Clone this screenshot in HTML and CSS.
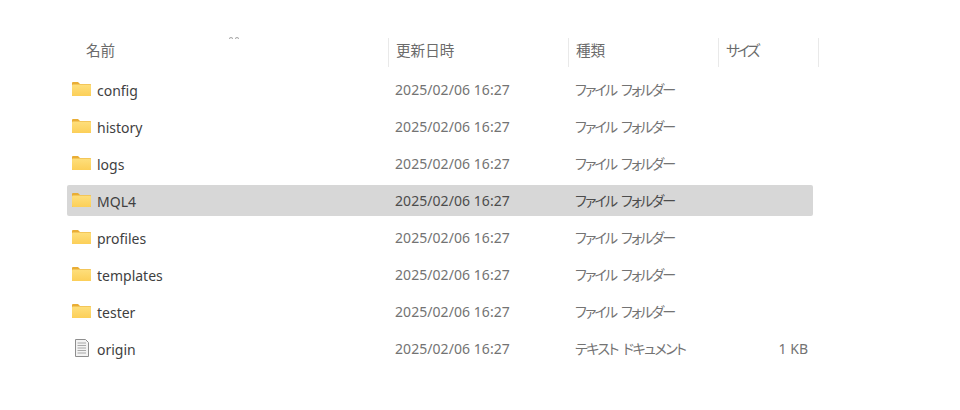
FILE: index.html
```html
<!DOCTYPE html>
<html lang="ja">
<head>
<meta charset="utf-8">
<title>Files</title>
<link rel="stylesheet" href="styles.css">
</head>
<body>
<main class="list">
  <div class="head">
    <div class="hcell hname">名前
      <svg class="sort" width="10" height="4" viewBox="0 0 10 4"><path d="M0.5 3 L1.5 1 M2.5 1 L3.5 3 M6.5 3 L7.5 1 M8.5 1 L9.5 3" stroke="#9a9a9a" stroke-width="1" fill="none"/></svg>
    </div>
    <div class="hcell">更新日時</div>
    <div class="hcell">種類</div>
    <div class="hcell hkana">サイズ</div>
  </div>
  <div class="rows">
    <div class="row"><span class="name"><svg class="ic" viewBox="0 0 19 14"><use href="#folder"/></svg>config</span><span class="date">2025/02/06 16:27</span><span class="kana">ファイル フォルダー</span><span class="size"></span></div>
    <div class="row"><span class="name"><svg class="ic" viewBox="0 0 19 14"><use href="#folder"/></svg>history</span><span class="date">2025/02/06 16:27</span><span class="kana">ファイル フォルダー</span><span class="size"></span></div>
    <div class="row"><span class="name"><svg class="ic" viewBox="0 0 19 14"><use href="#folder"/></svg>logs</span><span class="date">2025/02/06 16:27</span><span class="kana">ファイル フォルダー</span><span class="size"></span></div>
    <div class="row sel"><span class="name"><svg class="ic" viewBox="0 0 19 14"><use href="#folder"/></svg>MQL4</span><span class="date">2025/02/06 16:27</span><span class="kana">ファイル フォルダー</span><span class="size"></span></div>
    <div class="row"><span class="name"><svg class="ic" viewBox="0 0 19 14"><use href="#folder"/></svg>profiles</span><span class="date">2025/02/06 16:27</span><span class="kana">ファイル フォルダー</span><span class="size"></span></div>
    <div class="row"><span class="name"><svg class="ic" viewBox="0 0 19 14"><use href="#folder"/></svg>templates</span><span class="date">2025/02/06 16:27</span><span class="kana">ファイル フォルダー</span><span class="size"></span></div>
    <div class="row"><span class="name"><svg class="ic" viewBox="0 0 19 14"><use href="#folder"/></svg>tester</span><span class="date">2025/02/06 16:27</span><span class="kana">ファイル フォルダー</span><span class="size"></span></div>
    <div class="row"><span class="name"><svg class="ic doc" viewBox="0 0 20 20"><path d="M3.5 1.5H13.5L16.5 4.5V18.5H3.5Z" fill="#f3f3f3" stroke="#8e8e8e"/><path d="M5.5 5H14M5.5 7.5H14M5.5 10H14M5.5 12.5H14M5.5 15H14" stroke="#a8a8a8"/></svg>origin</span><span class="date">2025/02/06 16:27</span><span class="kana kana-wide">テキスト ドキュメント</span><span class="size">1 KB</span></div>
  </div>
</main>
<svg class="defs" width="0" height="0">
  <defs>
    <linearGradient id="fg" x1="0" y1="0" x2="0" y2="1"><stop offset="0" stop-color="#fedf7c"/><stop offset="1" stop-color="#fccf58"/></linearGradient>
    <symbol id="folder" viewBox="0 0 19 14">
      <path d="M0 1 Q0 0 1 0 H6 L8 2 H18 Q19 2 19 3 V13 Q19 14 18 14 H1 Q0 14 0 13 Z" fill="#e9ad35"/>
      <rect x="0" y="2.5" width="19" height="11.5" rx="1" fill="url(#fg)"/>
    </symbol>
  </defs>
</svg>
</body>
</html>
```
FILE: styles.css
```css
html, body { margin: 0; padding: 0; background: #fff; }
body {
  width: 960px;
  height: 410px;
  overflow: hidden;
  font-family: "Noto Sans", "Noto Sans CJK JP", sans-serif;
  font-size: 14px;
  color: #737373;
}
.list {
  width: 752px;
  margin-left: 67px;
  padding-top: 38px;
}
.head {
  display: grid;
  grid-template-columns: 322px 180px 150px 100px;
  height: 29px;
  margin-bottom: 7px;
}
.hcell {
  position: relative;
  display: flex;
  align-items: center;
  box-sizing: border-box;
  padding-left: 7px;
  padding-bottom: 7px;
  border-right: 1px solid #e9e9e9;
  color: #6b6b6b;
  font-size: 14.6px;
}
.hname { padding-left: 19px; }
.hkana {
  font-feature-settings: "palt";
  letter-spacing: -2.6px;
}
.sort { position: absolute; left: 162px; top: -2px; }
.rows {
  display: flex;
  flex-direction: column;
  gap: 6px;
  width: 746px;
}
.row {
  display: grid;
  grid-template-columns: 328px 180px 146px 87px;
  height: 31px;
  align-items: center;
  border-radius: 2px;
}
.sel { background: #d7d7d7; color: #4c4c4c; }
.name {
  display: flex;
  align-items: center;
  color: #3f3f3f;
  padding-left: 5px;
  position: relative;
  top: 1px;
}
.date { letter-spacing: 0.06px; }
.kana {
  font-feature-settings: "palt";
  letter-spacing: -1.8px;
  word-spacing: 3px;
  position: relative;
  top: -1px;
}
.kana-wide { letter-spacing: -1.5px; }
.ic { width: 19px; height: 14px; margin-right: 6px; margin-top: -3px; }
.doc { width: 20px; height: 20px; margin-right: 5px; margin-top: -3px; }
.size { text-align: right; }
.defs { position: absolute; }
```
